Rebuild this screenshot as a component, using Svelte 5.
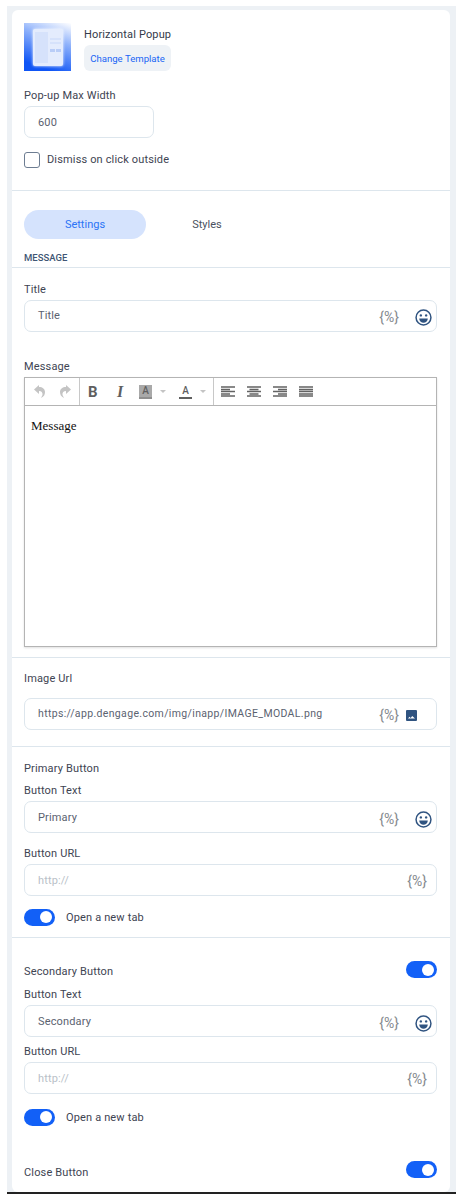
<script lang="ts">
	let openPrimary = $state(true);
	let openSecondary = $state(true);
	let secondary = $state(true);
	let closeButton = $state(true);
</script>

{#snippet vars(right = false)}
	<span class="vars" class:right>{'{%}'}</span>
{/snippet}

{#snippet smiley()}
	<svg class="smiley" viewBox="0 0 16 16" width="17" height="17">
		<circle cx="8" cy="8" r="7" fill="none" stroke="#2f5380" stroke-width="1.4" />
		<circle cx="5.5" cy="6" r="1.1" fill="#2f5380" />
		<circle cx="10.5" cy="6" r="1.1" fill="#2f5380" />
		<path d="M4 9h8a4 4 0 0 1-8 0z" fill="#2f5380" />
	</svg>
{/snippet}

{#snippet toggle(on: boolean, flip: () => void)}
	<button class="toggle" class:on onclick={flip} aria-label="toggle"><span></span></button>
{/snippet}

<div class="wrap">
	<div class="card">
		<section class="head">
			<div class="template">
				<div class="thumb">
					<div class="thumb-modal">
						<div class="thumb-img"></div>
						<div class="thumb-lines">
							<i class="line"></i>
							<i class="line"></i>
							<div class="btns"><i></i><i></i></div>
						</div>
					</div>
				</div>
				<div class="template-info">
					<div class="template-name">Horizontal Popup</div>
					<button class="change">Change Template</button>
				</div>
			</div>
			<div class="label width-label">Pop-up Max Width</div>
			<input class="field width-field" value="600" />
			<label class="check">
				<input type="checkbox" />
				<span>Dismiss on click outside</span>
			</label>
		</section>

		<div class="tabs">
			<button class="tab active">Settings</button>
			<button class="tab">Styles</button>
		</div>
		<div class="section-title">MESSAGE</div>

		<section class="message">
			<div class="label">Title</div>
			<div class="field with-icons">
				<span class="value">Title</span>
				{@render vars()}
				{@render smiley()}
			</div>
			<div class="label message-label">Message</div>
			<div class="editor">
				<div class="toolbar">
					<div class="group history">
						<svg viewBox="0 0 11 13" width="11" height="13"><path d="M5 0 0 4.500 5 9V6c2.500 0 3.800 1.500 3.500 4L7 13c3-1.500 4-3.500 4-6 0-3-2.500-5-6-5z" fill="#c4c4c4" /></svg>
						<svg viewBox="0 0 11 13" width="11" height="13"><path d="M6 0l5 4.500L6 9V6C3.500 6 2.200 7.500 2.500 10L4 13C1 11.500 0 9.500 0 7c0-3 2.500-5 6-5z" fill="#c4c4c4" /></svg>
					</div>
					<div class="group format">
						<span class="glyph bold">B</span>
						<span class="glyph italic">I</span>
						<span class="color back"><b>A</b></span>
						<i class="caret"></i>
						<span class="color fore"><b>A</b></span>
						<i class="caret"></i>
					</div>
					<div class="group aligns">
						<svg viewBox="0 0 14 11" width="14" height="11"><path d="M0 1h14M0 3.500h9M0 5.500h14M0 8h9M0 10h14" stroke="#636363" stroke-width="1.400" /></svg>
						<svg viewBox="0 0 14 11" width="14" height="11"><path d="M0 1h14M2.500 3.500h9M0 5.500h14M2.500 8h9M0 10h14" stroke="#636363" stroke-width="1.400" /></svg>
						<svg viewBox="0 0 14 11" width="14" height="11"><path d="M0 1h14M5 3.500h9M0 5.500h14M5 8h9M0 10h14" stroke="#636363" stroke-width="1.400" /></svg>
						<svg viewBox="0 0 14 11" width="14" height="11"><path d="M0 1h14M0 3.500h14M0 5.500h14M0 8h14M0 10h14" stroke="#636363" stroke-width="1.400" /></svg>
					</div>
				</div>
				<div class="editor-body">Message</div>
			</div>
		</section>

		<section class="image">
			<div class="label">Image Url</div>
			<div class="field with-icons">
				<span class="value">https://app.dengage.com/img/inapp/IMAGE_MODAL.png</span>
				{@render vars()}
				<svg class="pic" viewBox="0 0 11 11" width="11" height="11">
					<rect width="11" height="11" rx="1" fill="#2f5380" />
					<path d="M2 8.500l1.500-1.800 1.200 1.300 1.500-2 2.800 2.500z" fill="#fff" />
				</svg>
			</div>
		</section>

		<section class="primary">
			<div class="label">Primary Button</div>
			<div class="label text-label">Button Text</div>
			<div class="field with-icons">
				<span class="value">Primary</span>
				{@render vars()}
				{@render smiley()}
			</div>
			<div class="label url-label">Button URL</div>
			<div class="field with-icons">
				<span class="value hint">http://</span>
				{@render vars(true)}
			</div>
			<div class="tab-row">
				{@render toggle(openPrimary, () => (openPrimary = !openPrimary))}
				<span>Open a new tab</span>
			</div>
		</section>

		<section class="secondary">
			<div class="label-row">
				<div class="label">Secondary Button</div>
				{@render toggle(secondary, () => (secondary = !secondary))}
			</div>
			<div class="label text-label">Button Text</div>
			<div class="field with-icons">
				<span class="value">Secondary</span>
				{@render vars()}
				{@render smiley()}
			</div>
			<div class="label url-label">Button URL</div>
			<div class="field with-icons">
				<span class="value hint">http://</span>
				{@render vars(true)}
			</div>
			<div class="tab-row">
				{@render toggle(openSecondary, () => (openSecondary = !openSecondary))}
				<span>Open a new tab</span>
			</div>
			<div class="label-row close-row">
				<div class="label">Close Button</div>
				{@render toggle(closeButton, () => (closeButton = !closeButton))}
			</div>
		</section>
	</div>
</div>

<style>
	:global(body) {
		background: #fff;
		font-family: Roboto, sans-serif;
	}

	.wrap {
		width: 449px;
		height: 1188px;
		margin: 6px 0 0 7px;
		padding: 4px 6px 0 5px;
		box-sizing: border-box;
		background: #edf1f5;
		border-bottom: 2px solid #222;
	}

	.card {
		height: 1182px;
		background: #fff;
		border-radius: 6px;
		font-size: 11px;
		letter-spacing: 0.15px;
		color: #3e4452;
	}

	section {
		padding: 0 13px 0 12px;
	}

	.head {
		height: 181px;
		padding-top: 13px;
		box-sizing: border-box;
		border-bottom: 1px solid #dde6ed;
	}

	.template {
		display: flex;
		gap: 13px;
	}

	.thumb {
		width: 47px;
		height: 48px;
		display: flex;
		align-items: center;
		justify-content: center;
		background: linear-gradient(200deg, #ffffff 0%, #8fb2fb 35%, #0f55f5 85%);
	}

	.thumb-modal {
		width: 30px;
		height: 37px;
		display: flex;
		gap: 2px;
		padding: 3px 2px;
		box-sizing: border-box;
		border-radius: 2px;
		background: #e4ecfd;
		box-shadow: 0 0 3px #fff;
	}

	.thumb-img {
		width: 13px;
		background: #d6e2fb;
	}

	.thumb-lines {
		flex: 1;
		display: flex;
		flex-direction: column;
		gap: 2px;
		padding-top: 6px;
	}

	.line {
		height: 2px;
		background: #d6e2fb;
	}

	.btns {
		display: flex;
		gap: 1px;
		margin-top: 3px;
	}

	.btns i {
		flex: 1;
		height: 3px;
		background: #b9cdf7;
	}

	.template-info {
		padding-top: 5px;
	}

	.template-name {
		height: 13px;
		line-height: 13px;
		color: #333a4a;
	}

	.change {
		display: block;
		margin-top: 4px;
		width: 87px;
		height: 26px;
		padding: 0;
		border: 0;
		border-radius: 6px;
		background: #eef2f6;
		color: #1a66f5;
		font: inherit;
		font-size: 9.600px;
		letter-spacing: 0;
	}

	.label {
		height: 13px;
		line-height: 13px;
		color: #3e4452;
	}

	.width-label {
		margin-top: 18px;
	}

	.field {
		display: block;
		box-sizing: border-box;
		height: 32px;
		margin-top: 4px;
		padding: 0 4px 0 13px;
		border: 1px solid #dde6ed;
		border-radius: 7px;
		background: #fff;
		font: inherit;
		letter-spacing: inherit;
		color: #5b6270;
		outline: none;
	}

	.width-field {
		width: 130px;
	}

	.check {
		display: flex;
		align-items: center;
		gap: 7px;
		margin-top: 14px;
		height: 16px;
	}

	.check span {
		margin-top: -2px;
	}

	.check input {
		appearance: none;
		width: 16px;
		height: 16px;
		margin: 0;
		border: 1px solid #6d7d92;
		border-radius: 3px;
		background: #fff;
	}

	.tabs {
		display: flex;
		padding: 19px 0 0 12px;
	}

	.tab {
		width: 122px;
		height: 29px;
		padding: 0;
		border: 0;
		border-radius: 15px;
		background: transparent;
		color: #4a5160;
		font: inherit;
	}

	.tab.active {
		background: #d5e3fd;
		color: #2b74f6;
	}

	.section-title {
		height: 29px;
		box-sizing: border-box;
		padding: 13px 0 0 12px;
		line-height: 12px;
		border-bottom: 1px solid #dde6ed;
		font-size: 9.500px;
		font-weight: 500;
		letter-spacing: 0;
		color: #3f5674;
	}

	.message {
		padding-top: 15px;
		height: 390px;
		box-sizing: border-box;
		border-bottom: 1px solid #dde6ed;
	}

	.with-icons {
		display: flex;
		align-items: center;
	}

	.value {
		flex: 1;
		margin-top: -1px;
		white-space: nowrap;
	}

	.primary .value,
	.secondary .value {
		margin-top: 1px;
	}

	.hint {
		color: #b9bfc8;
	}

	.vars {
		font-size: 14px;
		letter-spacing: 0;
		color: #85898e;
		margin: 2px 16px 0 0;
	}

	.vars.right {
		margin-right: 5px;
	}

	.primary .vars:not(.right),
	.secondary .vars:not(.right) {
		margin-top: 4px;
	}

	.smiley {
		flex: none;
		margin-top: 2px;
	}

	.primary .smiley,
	.secondary .smiley {
		margin-top: 4px;
	}

	.pic {
		flex: none;
		margin: 2px 15px 0 -9px;
	}

	.message-label {
		margin-top: 28px;
	}

	.editor {
		height: 270px;
		margin-top: 4px;
		box-sizing: border-box;
		border: 1px solid #b4b4b4;
		box-shadow: 0 1px 2px rgba(0, 0, 0, 0.12);
	}

	.toolbar {
		display: flex;
		height: 28px;
		box-sizing: border-box;
		border-bottom: 1px solid #b4b4b4;
	}

	.group {
		display: flex;
		align-items: center;
		height: 27px;
	}

	.group > * {
		flex: none;
	}

	.history {
		width: 55px;
		gap: 15px;
		padding-left: 9px;
		box-sizing: border-box;
		border-right: 1px solid #c8c8c8;
	}

	.format {
		width: 134px;
		padding-left: 8px;
		box-sizing: border-box;
		border-right: 1px solid #c8c8c8;
	}

	.aligns {
		gap: 12px;
		padding-left: 7px;
	}

	.glyph {
		letter-spacing: 0;
		color: #5f5f5f;
	}

	.bold {
		width: 29px;
		font-size: 15px;
		font-weight: 700;
	}

	.italic {
		width: 22px;
		font: italic 700 16px "Liberation Serif", serif;
	}

	.color {
		display: block;
		width: 13px;
		height: 14px;
		box-sizing: border-box;
		text-align: center;
		font-size: 10px;
		line-height: 11px;
		letter-spacing: 0;
		color: #5f5f5f;
	}

	.color b {
		font-weight: 500;
	}

	.back {
		background: #a9a9a9;
		border-bottom: 2px solid #8f8f8f;
	}

	.fore {
		border-bottom: 2px solid #5f5f5f;
	}

	.caret {
		width: 0;
		height: 0;
		margin: 0 13px 0 8px;
		border: 3px solid transparent;
		border-top: 3.500px solid #c4c4c4;
		border-bottom: 0;
	}

	.caret:last-child {
		margin-right: 0;
	}

	.editor-body {
		padding: 12px 6px;
		font: 13px/16px "Liberation Serif", serif;
		letter-spacing: 0;
		color: #111;
	}

	.image {
		height: 89px;
		padding-top: 14px;
		box-sizing: border-box;
		border-bottom: 1px solid #dde6ed;
	}

	.image .field {
		margin-top: 13px;
	}

	.image .value {
		font-size: 10.500px;
		letter-spacing: 0.35px;
	}

	.primary {
		height: 191px;
		padding-top: 15px;
		box-sizing: border-box;
		border-bottom: 1px solid #dde6ed;
	}

	.text-label {
		margin-top: 9px;
	}

	.url-label {
		margin-top: 14px;
	}

	.tab-row {
		display: flex;
		align-items: center;
		gap: 11px;
		margin-top: 12px;
		height: 18px;
	}

	.toggle {
		display: block;
		position: relative;
		width: 31px;
		height: 17px;
		padding: 0;
		border: 0;
		border-radius: 9px;
		background: #c5ccd6;
	}

	.toggle.on {
		background: #1260f7;
	}

	.toggle span {
		position: absolute;
		top: 2.500px;
		left: 2px;
		width: 12px;
		height: 12px;
		border-radius: 50%;
		background: #fff;
	}

	.toggle.on span {
		left: 16px;
	}

	.secondary {
		padding-top: 23px;
	}

	.label-row {
		display: flex;
		align-items: center;
		justify-content: space-between;
		height: 17px;
	}

	.label-row .label {
		margin-top: 3px;
	}

	.close-row .label {
		margin-top: 5px;
	}

	.secondary .text-label {
		margin-top: 10px;
	}

	.secondary .url-label {
		margin-top: 8px;
	}

	.secondary .tab-row {
		margin-top: 14px;
	}

	.close-row {
		margin-top: 35px;
	}
</style>
